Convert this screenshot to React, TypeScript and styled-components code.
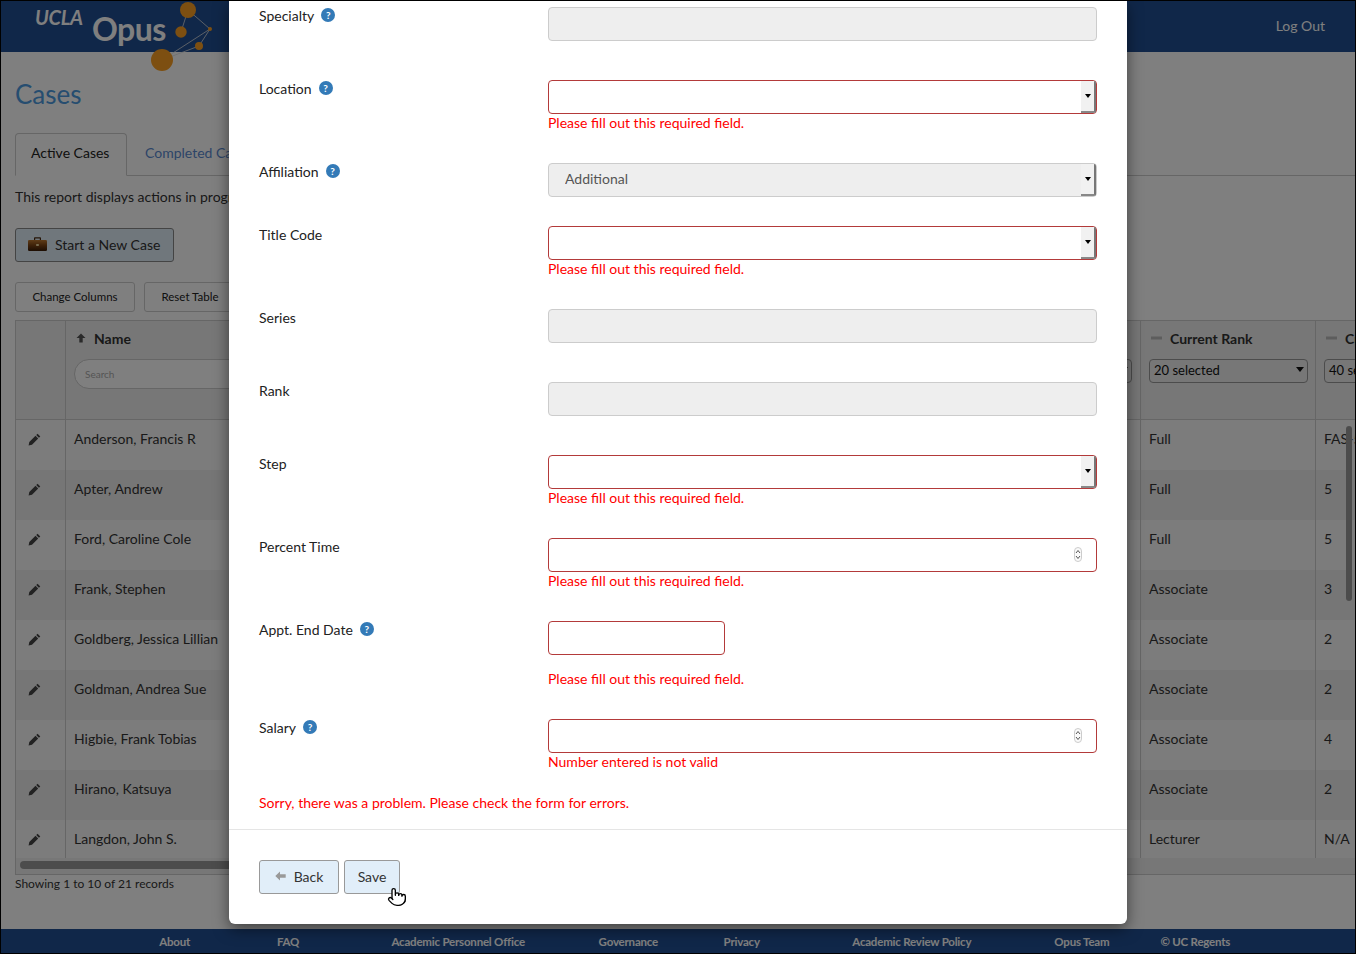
import React from "react";
import styled, { createGlobalStyle } from "styled-components";
import { Pointer } from "lucide-react";

const FONT = `"Lato", "Noto Sans", sans-serif`;

const Global = createGlobalStyle`
  html, body { margin: 0; padding: 0; background: #000; }
  body { font-family: ${FONT}; font-size: 14px; color: #222; }
  * { box-sizing: border-box; }
`;

const Screen = styled.div`
  position: relative;
  width: 1356px;
  height: 954px;
  border: 1px solid #000;
  overflow: hidden;
  background: #fff;
  display: flex;
  flex-direction: column;
`;
const Header = styled.header`
  position: relative;
  flex: none;
  height: 51px;
  background: #204e92;
  display: flex;
  align-items: center;
  justify-content: flex-end;
  padding: 0 30px 2px 0;
  color: #fff;
`;
const LogOut = styled.a`
  font-size: 14px;
  color: #fff;
`;
const Logo = styled.div`
  position: absolute;
  left: 34px;
  top: 0;
  width: 190px;
  height: 75px;
`;
const LogoUcla = styled.span`
  position: absolute;
  left: 0;
  top: 4px;
  font: italic 700 20px/24px ${FONT};
  color: #fff;
  letter-spacing: -0.3px;
`;
const LogoOpus = styled.span`
  position: absolute;
  left: 57px;
  top: 8px;
  font: 700 32px/40px ${FONT};
  color: #fff;
  letter-spacing: -0.5px;
`;
const LogoMark = styled.svg`
  position: absolute;
  left: -34px;
  top: -1px;
`;
const Main = styled.main`
  flex: 1;
  min-height: 0;
  padding-left: 14px;
  display: flex;
  flex-direction: column;
`;
const Title = styled.h1`
  margin: 26px 0 23px;
  font: 400 26px/32px ${FONT};
  color: #4d9be0;
`;
const Tabs = styled.div`
  display: flex;
  height: 43px;
  border-bottom: 1px solid #ccc;
  margin-left: 0;
`;
const Tab = styled.div<{ $active?: boolean }>`
  width: ${(p) => (p.$active ? "112px" : "auto")};
  padding: 0 ${(p) => (p.$active ? "15px" : "18px")} 4px;
  display: flex;
  align-items: center;
  height: ${(p) => (p.$active ? "43px" : "42px")};
  color: ${(p) => (p.$active ? "#222" : "#5a8ad0")};
  background: #fff;
  border: ${(p) => (p.$active ? "1px solid #ccc" : "none")};
  border-bottom: ${(p) => (p.$active ? "1px solid #fff" : "none")};
  border-radius: 4px 4px 0 0;
  white-space: nowrap;
`;
const Intro = styled.p`
  margin: 11px 0 21px;
  line-height: 20px;
  color: #333;
`;
const PrimaryButton = styled.button`
  width: 159px;
  height: 34px;
  display: flex;
  align-items: center;
  gap: 8px;
  padding: 0 12px 2px;
  font: 400 14px ${FONT};
  color: #333;
  background: #e1eef9;
  border: 1px solid #888;
  border-radius: 3px;
`;
const Tools = styled.div`
  display: flex;
  gap: 9px;
  margin: 20px 0 8px;
`;
const ToolButton = styled.button<{ $w: number }>`
  width: ${(p) => p.$w}px;
  height: 30px;
  padding: 0 0 2px;
  font: 400 11.5px ${FONT};
  color: #222;
  background: #fff;
  border: 1px solid #ccc;
  border-radius: 3px;
`;
const TableWrap = styled.div`
  position: relative;
  height: 555px;
  margin-right: -1px;
  border: 1px solid #ccc;
  border-right: 0;
  overflow: hidden;
  flex: none;
`;
const Row = styled.div<{ $tone: "head" | "odd" | "even" }>`
  display: grid;
  grid-template-columns: 50px 400px 675px 175px 60px;
  height: ${(p) => (p.$tone === "head" ? "99px" : "50px")};
  background: ${(p) =>
    p.$tone === "head" ? "#eee" : p.$tone === "even" ? "#ededed" : "#f8f8f8"};
  border-bottom: ${(p) => (p.$tone === "head" ? "1px solid #ccc" : "none")};
`;
const Cell = styled.div`
  border-right: 1px solid #ccc;
  padding: 0 8px 12px;
  line-height: 20px;
  display: flex;
  align-items: center;
  color: #333;
  white-space: nowrap;
  overflow: hidden;
`;
const IconCell = styled(Cell)`
  justify-content: center;
  padding: 0 12px 12px 0;
`;
const HeadCell = styled.div`
  border-right: 1px solid #ccc;
  padding: 7px 8px 0;
  overflow: hidden;
  white-space: nowrap;
`;
const HeadTitle = styled.div`
  display: flex;
  align-items: center;
  gap: 8px;
  height: 20px;
  padding-left: 2px;
  font-weight: 700;
  color: #333;
  & > svg { flex: none; }
`;
const HiddenHead = styled(HeadCell)`
  padding-top: 27px;
`;
const SearchBox = styled.input`
  display: block;
  width: 300px;
  height: 30px;
  margin-top: 11px;
  padding: 0 10px;
  font: 400 10px ${FONT};
  background: #fff;
  border: 1px solid #ccc;
  border-radius: 15px;
  &::placeholder { color: #aaa; }
`;
const FilterBox = styled.div<{ $w: number; $flushRight?: boolean }>`
  position: relative;
  width: ${(p) => p.$w}px;
  height: 24px;
  margin-top: 11px;
  margin-left: ${(p) => (p.$flushRight ? "auto" : "0")};
  padding: 0 0 2px 4px;
  display: flex;
  align-items: center;
  flex: none;
  font-size: 13px;
  color: #111;
  background: #eee;
  border: 1px solid #999;
  border-radius: 4px;
`;
const FilterCaret = styled.i`
  position: absolute;
  right: 3px;
  top: 7px;
  border-left: 4px solid transparent;
  border-right: 4px solid transparent;
  border-top: 5px solid #111;
`;
const HScroll = styled.div`
  position: absolute;
  left: 0;
  right: 0;
  bottom: 0;
  height: 16px;
  background: #eee;
  padding: 3px 4px;
`;
const HThumb = styled.div`
  width: 1000px;
  height: 8px;
  border-radius: 4px;
  background: #999;
`;
const VThumb = styled.div`
  position: absolute;
  right: 4px;
  top: 105px;
  width: 6px;
  height: 175px;
  border-radius: 3px;
  background: #999;
`;
const Records = styled.div`
  font-size: 12px;
  line-height: 18px;
  color: #333;
`;
const Footer = styled.footer`
  margin-top: auto;
  flex: none;
  height: 24px;
  background: #204e92;
  display: grid;
  grid-template-columns: 1fr 1fr 2fr 1fr 1fr 2fr 1fr 1fr;
  width: 1354px;
  padding: 0 103px 0 117px;
  align-items: center;
  position: absolute;
  left: 0;
  bottom: 0;
`;
const FootLink = styled.a`
  text-align: center;
  font-size: 11.5px;
  letter-spacing: -0.2px;
  font-weight: 700;
  color: #fff;
  white-space: nowrap;
`;
const Overlay = styled.div`
  position: absolute;
  inset: 0;
  background: rgba(0, 0, 0, 0.5);
`;
const Modal = styled.section`
  position: absolute;
  left: 228px;
  top: 0;
  width: 898px;
  height: 923px;
  background: #fff;
  border-radius: 0 0 6px 6px;
  box-shadow: 0 5px 15px rgba(0, 0, 0, 0.5);
  display: flex;
  flex-direction: column;
`;
const ModalBody = styled.div`
  padding: 6px 30px 0;
`;
const FormRow = styled.div<{ $tight?: boolean }>`
  display: grid;
  grid-template-columns: 289px 549px;
  padding-bottom: ${(p) => (p.$tight ? "29px" : "39px")};
`;
const Label = styled.label`
  display: flex;
  align-items: center;
  gap: 7px;
  height: 20px;
  margin-top: -2px;
  color: #222;
`;
const Help = styled.span`
  width: 14px;
  height: 14px;
  border-radius: 50%;
  background: #337ab7;
  color: #fff;
  font: 700 10px/14px ${FONT};
  text-align: center;
`;
const TextInput = styled.input<{ $err?: boolean; $w?: number; $filled?: boolean }>`
  display: block;
  width: ${(p) => (p.$w ? `${p.$w}px` : "100%")};
  height: 34px;
  padding: 0 16px 3px;
  font: 400 14px ${FONT};
  color: #555;
  background: ${(p) => (p.disabled || p.$filled ? "#eee" : "#fff")};
  border: 1px solid ${(p) => (p.$err ? "#b33a3a" : "#ccc")};
  border-radius: 4px;
`;
const FieldBox = styled.div`
  position: relative;
  height: 34px;
`;
const SelectTab = styled.span`
  position: absolute;
  right: 1px;
  top: 1px;
  bottom: 1px;
  width: 15px;
  background: #f1f1f1;
  border-right: 2px solid #777;
  border-bottom: 2px solid #888;
  border-radius: 0 2px 2px 0;
  display: flex;
  align-items: center;
  justify-content: center;
`;
const SelectCaret = styled.i`
  border-left: 3.5px solid transparent;
  border-right: 3.5px solid transparent;
  border-top: 4px solid #000;
`;
const Stepper = styled.span`
  position: absolute;
  right: 15px;
  top: 9px;
  width: 8px;
  height: 15px;
  border: 1px solid #ccc;
  border-radius: 4px;
  background: #fafafa;
`;
const StepGlyph = styled.svg`
  display: block;
`;
const ErrorText = styled.div<{ $gap?: number }>`
  height: 20px;
  margin-top: ${(p) => p.$gap ?? 0}px;
  line-height: 18px;
  color: #f00;
`;
const Problem = styled.div`
  margin-top: -8px;
  height: 20px;
  line-height: 18px;
  color: #f00;
`;
const ModalFooter = styled.div`
  position: relative;
  margin-top: 15px;
  padding: 30px;
  border-top: 1px solid #e5e5e5;
  display: flex;
  gap: 5px;
`;
const FootButton = styled.button<{ $w: number }>`
  width: ${(p) => p.$w}px;
  height: 34px;
  display: flex;
  align-items: center;
  justify-content: center;
  gap: 8px;
  padding: 0 0 2px;
  font: 400 14px ${FONT};
  color: #333;
  background: #e1eef9;
  border: 1px solid #999;
  border-radius: 3px;
`;
const Cursor = styled(Pointer)`
  position: absolute;
  left: 158px;
  top: 57px;
  fill: #fff;
  color: #000;
`;

const PencilIcon = () => (
  <svg width="13" height="13" viewBox="0 0 13 13" aria-hidden>
    <path d="M9.6 .7l2.7 2.7-1.4 1.4-2.7-2.7zM7.5 2.8l2.7 2.7-6.2 6.2L.6 12.4l.7-3.4z" fill="#444" />
  </svg>
);
const ArrowUp = () => (
  <svg width="10" height="10" viewBox="0 0 10 10" aria-hidden>
    <path d="M5 .5L9.5 5H6.7v4.5H3.3V5H.5z" fill="#555" />
  </svg>
);
const ArrowLeft = () => (
  <svg width="11" height="10" viewBox="0 0 11 10" aria-hidden>
    <path d="M.3 5L5 .6v2.7h5.7v3.4H5v2.7z" fill="#999" />
  </svg>
);
const MinusBar = () => (
  <svg width="11" height="4" viewBox="0 0 11 4" aria-hidden>
    <rect y="0.5" width="11" height="3" fill="#bbb" />
  </svg>
);
const Briefcase = () => (
  <svg width="19" height="14" viewBox="0 0 19 14" aria-hidden>
    <defs>
      <linearGradient id="bc" x1="0" y1="0" x2="0" y2="1">
        <stop offset="0" stopColor="#c07a30" />
        <stop offset="0.5" stopColor="#7a4212" />
        <stop offset="1" stopColor="#3a1c06" />
      </linearGradient>
    </defs>
    <path d="M6 3V1.2C6 .6 6.5.3 7 .3h5c.5 0 1 .3 1 .9V3h-1.2V1.5H7.2V3z" fill="#4a2a10" />
    <rect y="3" width="19" height="11" rx="1.2" fill="url(#bc)" />
    <rect x="8.2" y="7" width="2.6" height="2" fill="#f0d9a0" />
  </svg>
);
const LogoGraphic = () => (
  <LogoMark width="224" height="76" viewBox="0 0 224 76" aria-hidden>
    <g stroke="#ddd" strokeWidth="0.8" fill="none">
      <path d="M187 10L209 29M187 10L180 32M209 29L161 60M209 29L198 46L161 60" />
    </g>
    <g fill="#fa9f22">
      <circle cx="187" cy="10" r="8" />
      <circle cx="180" cy="32" r="5.7" />
      <circle cx="209" cy="29" r="2" />
      <circle cx="198" cy="46" r="4" />
      <circle cx="161" cy="60" r="11" />
    </g>
  </LogoMark>
);

const rows: [string, string, string][] = [
  ["Anderson, Francis R", "Full", "FAS-5"],
  ["Apter, Andrew", "Full", "5"],
  ["Ford, Caroline Cole", "Full", "5"],
  ["Frank, Stephen", "Associate", "3"],
  ["Goldberg, Jessica Lillian", "Associate", "2"],
  ["Goldman, Andrea Sue", "Associate", "2"],
  ["Higbie, Frank Tobias", "Associate", "4"],
  ["Hirano, Katsuya", "Associate", "2"],
  ["Langdon, John S.", "Lecturer", "N/A"],
];
const links = [
  "About",
  "FAQ",
  "Academic Personnel Office",
  "Governance",
  "Privacy",
  "Academic Review Policy",
  "Opus Team",
  "© UC Regents",
];

type FieldKind = "disabled" | "select" | "number" | "date";
interface Field {
  label: string;
  help?: boolean;
  kind: FieldKind;
  err?: boolean;
  value?: string;
  message?: string;
  gap?: number;
  tight?: boolean;
}
const REQUIRED = "Please fill out this required field.";
const fields: Field[] = [
  { label: "Specialty", help: true, kind: "disabled" },
  { label: "Location", help: true, kind: "select", err: true, message: REQUIRED, tight: true },
  { label: "Affiliation", help: true, kind: "select", value: "Additional", tight: true },
  { label: "Title Code", kind: "select", err: true, message: REQUIRED, tight: true },
  { label: "Series", kind: "disabled" },
  { label: "Rank", kind: "disabled" },
  { label: "Step", kind: "select", err: true, message: REQUIRED, tight: true },
  { label: "Percent Time", kind: "number", err: true, message: REQUIRED, tight: true },
  { label: "Appt. End Date", help: true, kind: "date", err: true, message: REQUIRED, gap: 15, tight: true },
  { label: "Salary", help: true, kind: "number", err: true, message: "Number entered is not valid", tight: true },
];

const Control = ({ f }: { f: Field }) => {
  if (f.kind === "date") return <TextInput $err $w={177} readOnly />;
  if (f.kind === "disabled") return <TextInput disabled />;
  return (
    <FieldBox>
      <TextInput $err={f.err} $filled={!!f.value} readOnly value={f.value ?? ""} />
      {f.kind === "select" ? (
        <SelectTab>
          <SelectCaret />
        </SelectTab>
      ) : (
        <Stepper>
          <StepGlyph width="6" height="13" viewBox="0 0 6 13" aria-hidden>
            <path d="M1 5l2-2.5L5 5M1 8l2 2.5L5 8" stroke="#555" strokeWidth="1" fill="none" />
          </StepGlyph>
        </Stepper>
      )}
    </FieldBox>
  );
};

export default function App() {
  return (
    <>
      <Global />
      <Screen>
        <Header>
          <Logo>
            <LogoGraphic />
            <LogoUcla>UCLA</LogoUcla>
            <LogoOpus>Opus</LogoOpus>
          </Logo>
          <LogOut>Log Out</LogOut>
        </Header>
        <Main>
          <Title>Cases</Title>
          <Tabs>
            <Tab $active>Active Cases</Tab>
            <Tab>Completed Cases</Tab>
          </Tabs>
          <Intro>This report displays actions in progress for your units.</Intro>
          <PrimaryButton>
            <Briefcase />
            Start a New Case
          </PrimaryButton>
          <Tools>
            <ToolButton $w={120}>Change Columns</ToolButton>
            <ToolButton $w={92}>Reset Table</ToolButton>
          </Tools>
          <TableWrap>
            <Row $tone="head">
              <HeadCell />
              <HeadCell>
                <HeadTitle>
                  <ArrowUp />
                  Name
                </HeadTitle>
                <SearchBox placeholder="Search" readOnly />
              </HeadCell>
              <HiddenHead>
                <FilterBox $w={159} $flushRight>
                  <FilterCaret />
                </FilterBox>
              </HiddenHead>
              <HeadCell>
                <HeadTitle>
                  <MinusBar />
                  Current Rank
                </HeadTitle>
                <FilterBox $w={159}>
                  20 selected
                  <FilterCaret />
                </FilterBox>
              </HeadCell>
              <HeadCell>
                <HeadTitle>
                  <MinusBar />
                  Current Step
                </HeadTitle>
                <FilterBox $w={159}>40 selected</FilterBox>
              </HeadCell>
            </Row>
            {rows.map(([name, rank, step], i) => (
              <Row key={name} $tone={i % 2 ? "even" : "odd"}>
                <IconCell>
                  <PencilIcon />
                </IconCell>
                <Cell>{name}</Cell>
                <Cell />
                <Cell>{rank}</Cell>
                <Cell>{step}</Cell>
              </Row>
            ))}
            <VThumb />
            <HScroll>
              <HThumb />
            </HScroll>
          </TableWrap>
          <Records>Showing 1 to 10 of 21 records</Records>
        </Main>
        <Footer>
          {links.map((l) => (
            <FootLink key={l}>{l}</FootLink>
          ))}
        </Footer>
        <Overlay />
        <Modal>
          <ModalBody>
            {fields.map((f) => (
              <FormRow key={f.label} $tight={f.tight}>
                <Label>
                  {f.label}
                  {f.help && <Help>?</Help>}
                </Label>
                <div>
                  <Control f={f} />
                  {f.message && <ErrorText $gap={f.gap}>{f.message}</ErrorText>}
                </div>
              </FormRow>
            ))}
            <Problem>Sorry, there was a problem. Please check the form for errors.</Problem>
          </ModalBody>
          <ModalFooter>
            <FootButton $w={80}>
              <ArrowLeft />
              Back
            </FootButton>
            <FootButton $w={56}>Save</FootButton>
            <Cursor size={20} strokeWidth={1.6} />
          </ModalFooter>
        </Modal>
      </Screen>
    </>
  );
}
